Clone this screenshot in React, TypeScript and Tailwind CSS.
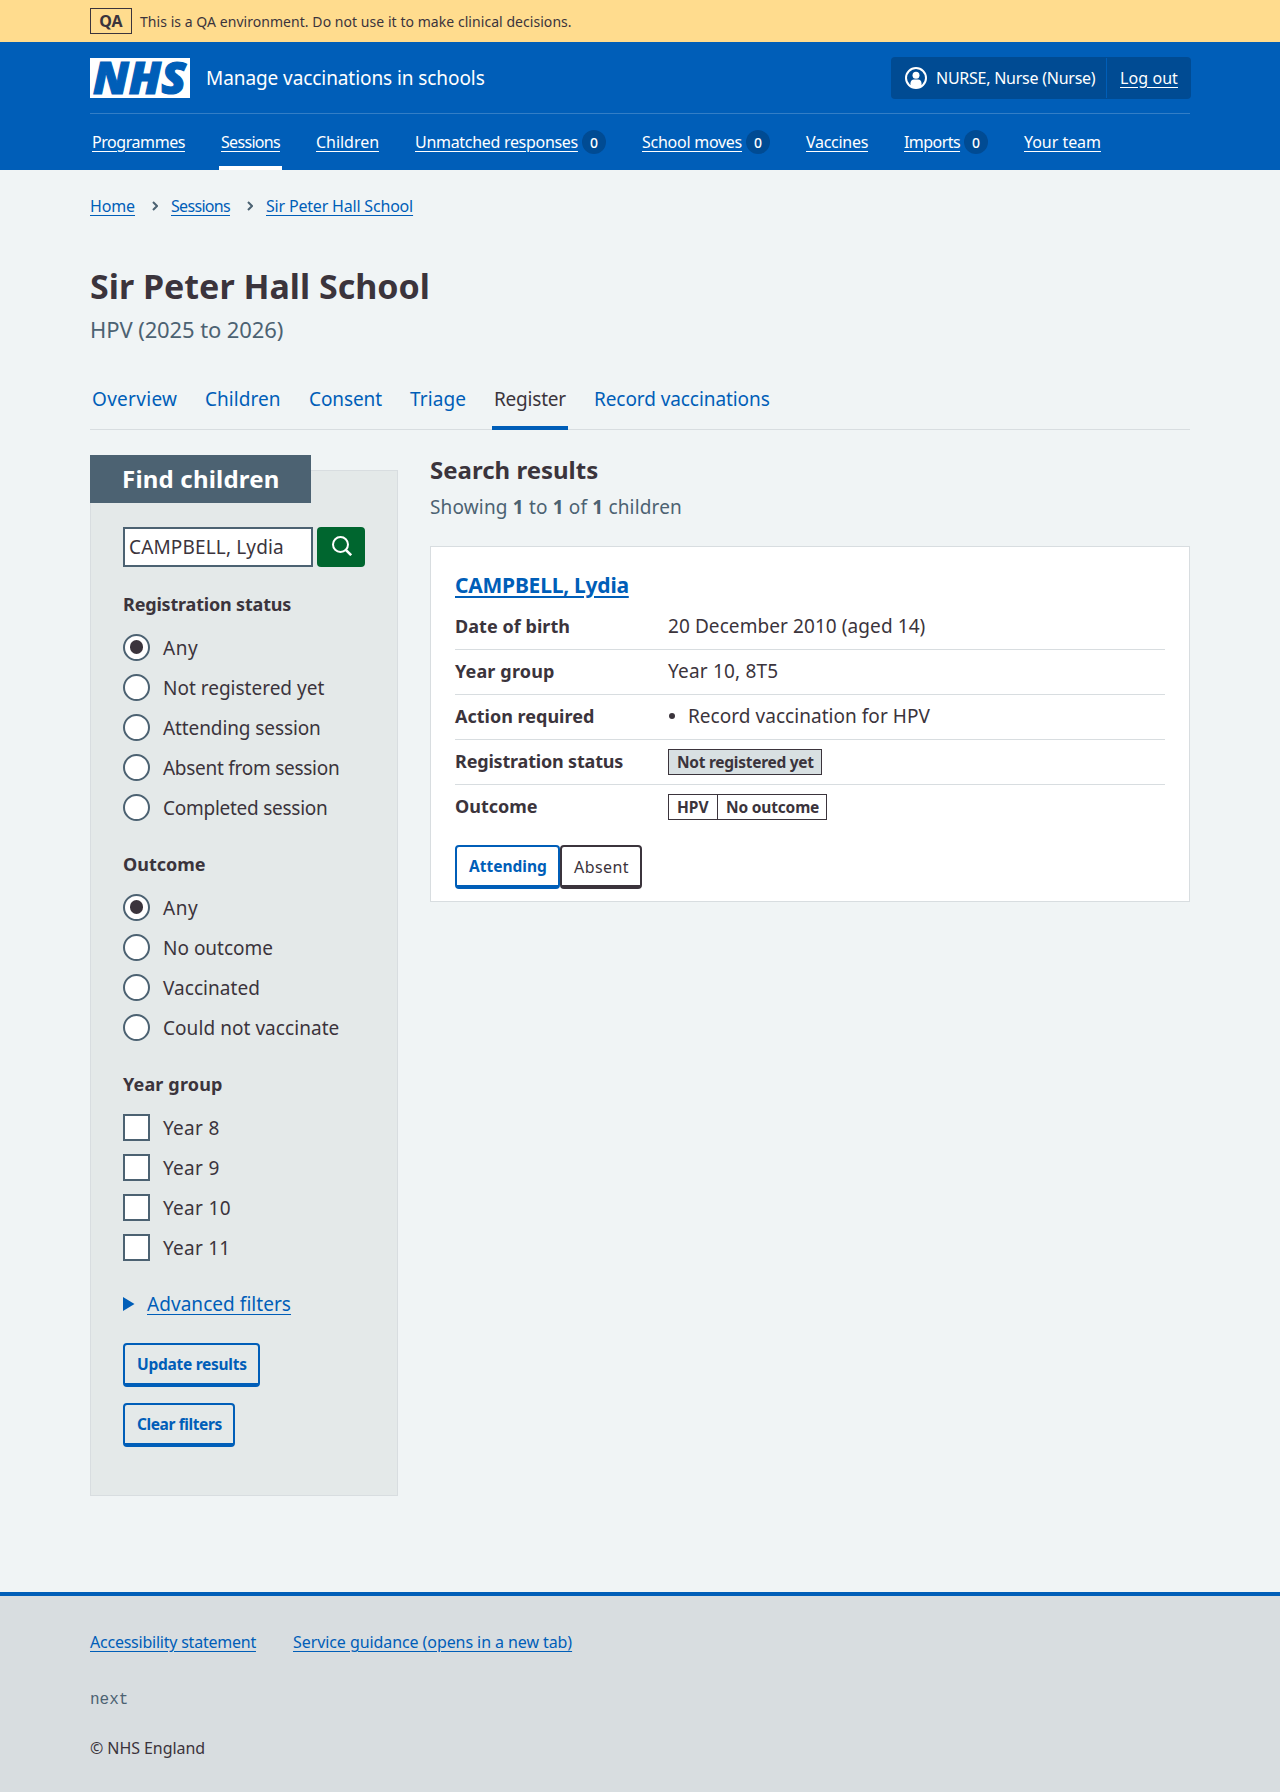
import React from "react";

function Chevron() {
  return (
    <svg className="mr-[13px] ml-[17px] shrink-0" width="6" height="10" viewBox="0 0 6 10" fill="none" stroke="#4c6272" strokeWidth="2">
      <path d="M1 1l4 4-4 4" />
    </svg>
  );
}

function Badge() {
  return (
    <span className="ml-1 flex h-6 w-6 items-center justify-center rounded-full bg-[#004b93] pt-px text-sm font-medium">0</span>
  );
}

const nav = [
  { label: "Programmes", cls: "w-[93px] tracking-[-0.44px]" },
  { label: "Sessions", cls: "w-[59px] tracking-[-0.69px]", active: true },
  { label: "Children", cls: "w-[63px] tracking-[-0.04px]" },
  { label: "Unmatched responses", cls: "w-[163px] tracking-[-0.3px]", badge: true },
  { label: "School moves", cls: "w-[100px] tracking-[-0.26px]", badge: true },
  { label: "Vaccines", cls: "w-[62px] tracking-[-0.29px]" },
  { label: "Imports", cls: "w-[56px] tracking-[-0.56px]", badge: true },
  { label: "Your team", cls: "w-[77px] tracking-[-0.04px]" },
];

const tabs = [
  { label: "Overview", cls: "w-[85px] tracking-[0.3px]" },
  { label: "Children", cls: "w-[76px] tracking-[0.05px]" },
  { label: "Consent", cls: "w-[73px] tracking-[-0.1px]" },
  { label: "Triage", cls: "w-[56px] tracking-[0.09px]" },
  { label: "Register", cls: "w-[72px] tracking-[-0.21px]", active: true },
  { label: "Record vaccinations", cls: "w-[176px] tracking-[-0.08px]" },
];

const statuses = [
  { label: "Any", cls: "w-[36px] tracking-[0.5px]" },
  { label: "Not registered yet", cls: "w-[162px]" },
  { label: "Attending session", cls: "w-[158px] tracking-[-0.1px]" },
  { label: "Absent from session", cls: "w-[177px] tracking-[-0.27px]" },
  { label: "Completed session", cls: "w-[165px] tracking-[-0.26px]" },
];

const outcomes = [
  { label: "Any", cls: "w-[36px] tracking-[0.5px]" },
  { label: "No outcome", cls: "w-[110px]" },
  { label: "Vaccinated", cls: "w-[97px] tracking-[0.05px]" },
  { label: "Could not vaccinate", cls: "w-[177px] tracking-[0.06px]" },
];

const years = [
  { label: "Year 8", cls: "w-[57px] tracking-[0.3px]" },
  { label: "Year 9", cls: "w-[57px] tracking-[0.3px]" },
  { label: "Year 10", cls: "w-[68px] tracking-[0.3px]" },
  { label: "Year 11", cls: "w-[67px] tracking-[0.25px]" },
];

type Option = { label: string; cls: string };

function Legend({ children, cls }: { children: React.ReactNode; cls: string }) {
  return (
    <h3 className="flex h-7 text-[18px] leading-[26px] font-bold">
      <span className={"whitespace-nowrap " + cls}>{children}</span>
    </h3>
  );
}

function Options({ items, kind }: { items: Option[]; kind: "radio" | "checkbox" }) {
  return (
    <ul className="mt-2">
      {items.map((o, i) => (
        <li key={o.label} className="flex h-10 items-center">
          <span
            className={
              kind === "radio"
                ? "flex h-[27px] w-[27px] items-center justify-center rounded-full border-2 border-[#4c6272] bg-white"
                : "h-[27px] w-[27px] border-2 border-[#4c6272] bg-white"
            }
          >
            {kind === "radio" && i === 0 && <span className="h-[13.5px] w-[13.5px] rounded-full bg-[#3b343c]" />}
          </span>
          <span className={"ml-[13px] pt-0.5 text-[19px] leading-7 whitespace-nowrap " + o.cls}>{o.label}</span>
        </li>
      ))}
    </ul>
  );
}

function Row({ label, cls, last, children }: { label: string; cls?: string; last?: boolean; children: React.ReactNode }) {
  return (
    <div className={"flex h-[45px] items-center border-b pb-[3px] text-[19px] leading-7 " + (last ? "border-transparent" : "border-[#d8dde0]")}>
      <dt className="w-[213px] shrink-0 text-[18px] font-bold">
        <span className={"whitespace-nowrap " + (cls ?? "")}>{label}</span>
      </dt>
      <dd className="flex items-center">{children}</dd>
    </div>
  );
}

export default function App() {
  return (
    <div className="flex min-h-[1792px] flex-col bg-[#f0f4f5] font-['Noto_Sans',sans-serif] text-[#3b343c]">
      <div className="h-[42px] bg-[#ffdc8e]">
        <div className="mx-auto flex h-full w-[1100px] items-center">
          <strong className="flex h-[26px] w-[42px] items-center justify-center border border-[#3b343c] text-base font-bold">
            QA
          </strong>
          <span className="ml-2 pt-[2px] text-sm tracking-[0.05px] whitespace-nowrap">
            This is a QA environment. Do not use it to make clinical decisions.
          </span>
        </div>
      </div>

      <header className="h-32 bg-[#005eb8] text-white">
        <div className="mx-auto w-[1100px]">
          <div className="flex h-[72px] items-center border-b border-[#337ec6]">
            <svg className="h-10 w-[100px] shrink-0 overflow-visible" viewBox="0 0 100 40">
              <rect width="100" height="40" fill="#fff" />
              <text x="3" y="36" textLength="93" lengthAdjust="spacingAndGlyphs" fontFamily="Noto Sans" fontSize="45" fontWeight="900" fontStyle="italic" fill="#005eb8" stroke="#005eb8" strokeWidth="1.2">
                NHS
              </text>
            </svg>
            <span className="ml-[16px] text-[19px] leading-7 tracking-[-0.08px] whitespace-nowrap">Manage vaccinations in schools</span>
            <div className="mr-[-1px] ml-auto flex h-[42px] w-[300px] items-center rounded bg-[#004b93] text-base">
              <svg className="ml-[14px] h-[22px] w-[22px] shrink-0" viewBox="0 0 22 22">
                <circle cx="11" cy="11" r="10" fill="none" stroke="#fff" strokeWidth="2" />
                <circle cx="11" cy="8.2" r="3.5" fill="#fff" />
                <path d="M5.500 19v-2.700c0-2.300 1.400-3.900 3.500-3.900h4c2.100 0 3.500 1.600 3.500 3.900V19c-3 2.600-8 2.600-11 0z" fill="#fff" />
              </svg>
              <span className="ml-[9px] w-[160px] tracking-[-0.25px] whitespace-nowrap">NURSE, Nurse (Nurse)</span>
              <span className="ml-[10px] h-10 w-px bg-[#005eb8]" />
              <a className="ml-[13px] w-[58px] tracking-[0.08px] whitespace-nowrap underline underline-offset-[3px]">Log out</a>
            </div>
          </div>
          <nav className="flex h-14 gap-8 text-base">
            {nav.map((n) => (
              <div key={n.label} className={"flex h-14 items-center border-y-4 border-transparent px-0.5 " + (n.active ? "border-b-white" : "")}>
                <a className={"whitespace-nowrap underline underline-offset-[3px] " + n.cls}>{n.label}</a>
                {n.badge && <Badge />}
              </div>
            ))}
          </nav>
        </div>
      </header>

      <main className="mx-auto h-[1422px] w-[1100px]">
        <div className="flex h-[72px] items-center text-base text-[#005eb8]">
          <a className="w-[45px] tracking-[-0.13px] whitespace-nowrap underline underline-offset-[3px]">Home</a>
          <Chevron />
          <a className="w-[59px] tracking-[-0.69px] whitespace-nowrap underline underline-offset-[3px]">Sessions</a>
          <Chevron />
          <a className="w-[147px] tracking-[-0.19px] whitespace-nowrap underline underline-offset-[3px]">Sir Peter Hall School</a>
        </div>

        <h1 className="mt-5 h-12 text-[34px] leading-[48px] font-bold">Sir Peter Hall School</h1>
        <p className="h-10 text-[22px] leading-[39px] tracking-[-0.1px] text-[#4c6272]">HPV (2025 to 2026)</p>

        <nav className="mt-[18px] flex h-[62px] gap-6 border-b border-[#d8dde0] text-[19px] text-[#005eb8]">
          {tabs.map((t) => (
            <div key={t.label} className={"-mb-px flex h-[62px] items-center border-y-4 border-transparent px-0.5 pt-px " + (t.active ? "border-b-[#005eb8] text-[#3b343c]" : "")}>
              <a className={"whitespace-nowrap " + t.cls}>{t.label}</a>
            </div>
          ))}
        </nav>

        <div className="flex items-start gap-8">
          <aside className="mt-10 h-[1026px] w-[308px] border border-[#d8dde0] bg-[#e4e9e9] px-8">
            <h2 className="-mt-4 -ml-[33px] h-12 w-[221px] bg-[#4c6272] pl-8 text-2xl leading-[48px] font-bold tracking-[0.2px] whitespace-nowrap text-white">
              Find children
            </h2>
            <div className="mt-6 flex h-10 gap-1">
              <div className="flex w-[190px] items-center border-2 border-[#4c6272] bg-white pb-px pl-1 text-[19px] leading-7 tracking-[0.15px] whitespace-nowrap">
                CAMPBELL, Lydia
              </div>
              <button className="flex h-10 w-12 items-center justify-center rounded bg-[#00662f]">
                <svg className="-mt-0.5 ml-0.5" width="20" height="20" viewBox="0 0 20 20" fill="none" stroke="#fff" strokeWidth="2">
                  <circle cx="8.500" cy="8.500" r="7.500" />
                  <path d="M13.800 13.800l5.400 5.400" strokeWidth="2.600" />
                </svg>
              </button>
            </div>
            <div className="mt-6">
              <Legend cls="tracking-[-0.18px]">Registration status</Legend>
              <Options items={statuses} kind="radio" />
            </div>
            <div className="mt-6">
              <Legend cls="tracking-normal">Outcome</Legend>
              <Options items={outcomes} kind="radio" />
            </div>
            <div className="mt-6">
              <Legend cls="tracking-[0.15px]">Year group</Legend>
              <Options items={years} kind="checkbox" />
            </div>
            <div className="mt-[23px] flex h-7 items-center text-[19px] leading-7 text-[#005eb8]">
              <svg width="12" height="14" viewBox="0 0 12 14" fill="#005eb8">
                <path d="M0 0l11.500 7L0 14z" />
              </svg>
              <a className="ml-3 tracking-[0.05px] whitespace-nowrap underline underline-offset-[3px]">Advanced filters</a>
            </div>
            <button className="mt-[25px] flex h-11 w-[137px] items-center rounded border-2 border-b-4 border-[#005eb8] pt-0.5 pl-3 text-[15.5px] font-bold tracking-[-0.27px] whitespace-nowrap text-[#005eb8]">
              Update results
            </button>
            <button className="mt-4 flex h-11 w-[112px] items-center rounded border-2 border-b-4 border-[#005eb8] pt-0.5 pl-3 text-[15.5px] font-bold tracking-[-0.4px] whitespace-nowrap text-[#005eb8]">
              Clear filters
            </button>
          </aside>

          <section className="w-[760px] pt-6">
            <h2 className="h-8 text-2xl leading-8 font-bold">Search results</h2>
            <p className="mt-[7px] h-7 text-[19px] leading-7 tracking-[0.16px] text-[#4c6272]">
              Showing <b>1</b> to <b>1</b> of <b>1</b> children
            </p>
            <article className="mt-[25px] h-[356px] border border-[#d8dde0] bg-white px-6 pt-[22px]">
              <h3 className="h-8 text-[21px] leading-8 font-bold tracking-[-0.24px] text-[#005eb8]">
                <a className="underline decoration-2 underline-offset-[3px]">CAMPBELL, Lydia</a>
              </h3>
              <dl className="mt-1">
                <Row label="Date of birth" cls="tracking-[0.05px]">
                  <span className="tracking-[0.08px]">20 December 2010 (aged 14)</span>
                </Row>
                <Row label="Year group" cls="tracking-[0.15px]">
                  <span className="tracking-[0.2px]">Year 10, 8T5</span>
                </Row>
                <Row label="Action required">
                  <span className="mr-[13px] ml-px h-1.5 w-1.5 rounded-full bg-[#3b343c]" />
                  <span className="tracking-[0.04px]">Record vaccination for HPV</span>
                </Row>
                <Row label="Registration status" cls="tracking-[-0.18px]">
                  <strong className="mt-[3px] flex h-[26px] w-[154px] items-center border border-[#3b343c] bg-[#d8e0e2] pl-2 text-[15.5px] font-bold tracking-[-0.27px] whitespace-nowrap">
                    Not registered yet
                  </strong>
                </Row>
                <Row label="Outcome" last>
                  <strong className="mt-[3px] flex h-[26px] items-center border border-[#3b343c] text-[15.5px] font-bold whitespace-nowrap">
                    <span className="flex h-full w-[49px] items-center border-r border-[#3b343c] pl-2">HPV</span>
                    <span className="flex w-[108px] items-center pl-2 tracking-[-0.17px]">No outcome</span>
                  </strong>
                </Row>
              </dl>
              <div className="mt-[15px] flex text-base">
                <button className="flex h-11 w-[105px] items-center rounded border-2 border-b-4 border-[#005eb8] pt-0.5 pl-3 text-[15.5px] font-bold text-[#005eb8]">
                  Attending
                </button>
                <button className="flex h-11 w-[82px] items-center rounded border-2 border-b-4 border-[#3b343c] pt-0.5 pl-3 tracking-[0.43px]">
                  Absent
                </button>
              </div>
            </article>
          </section>
        </div>
      </main>

      <footer className="h-[200px] border-t-4 border-[#005eb8] bg-[#d8dde0] text-base">
        <div className="mx-auto w-[1100px] pt-[34px]">
          <div className="flex gap-[37px] text-[#005eb8]">
            <a className="w-[166px] tracking-[-0.23px] whitespace-nowrap underline underline-offset-[3px]">Accessibility statement</a>
            <a className="w-[279px] tracking-[-0.08px] whitespace-nowrap underline underline-offset-[3px]">Service guidance (opens in a new tab)</a>
          </div>
          <p className="mt-[34px] h-6 font-['Liberation_Mono',monospace] leading-6 text-[#4c6272]">next</p>
          <p className="mt-6 h-6 tracking-[-0.07px]">© NHS England</p>
        </div>
      </footer>
    </div>
  );
}
